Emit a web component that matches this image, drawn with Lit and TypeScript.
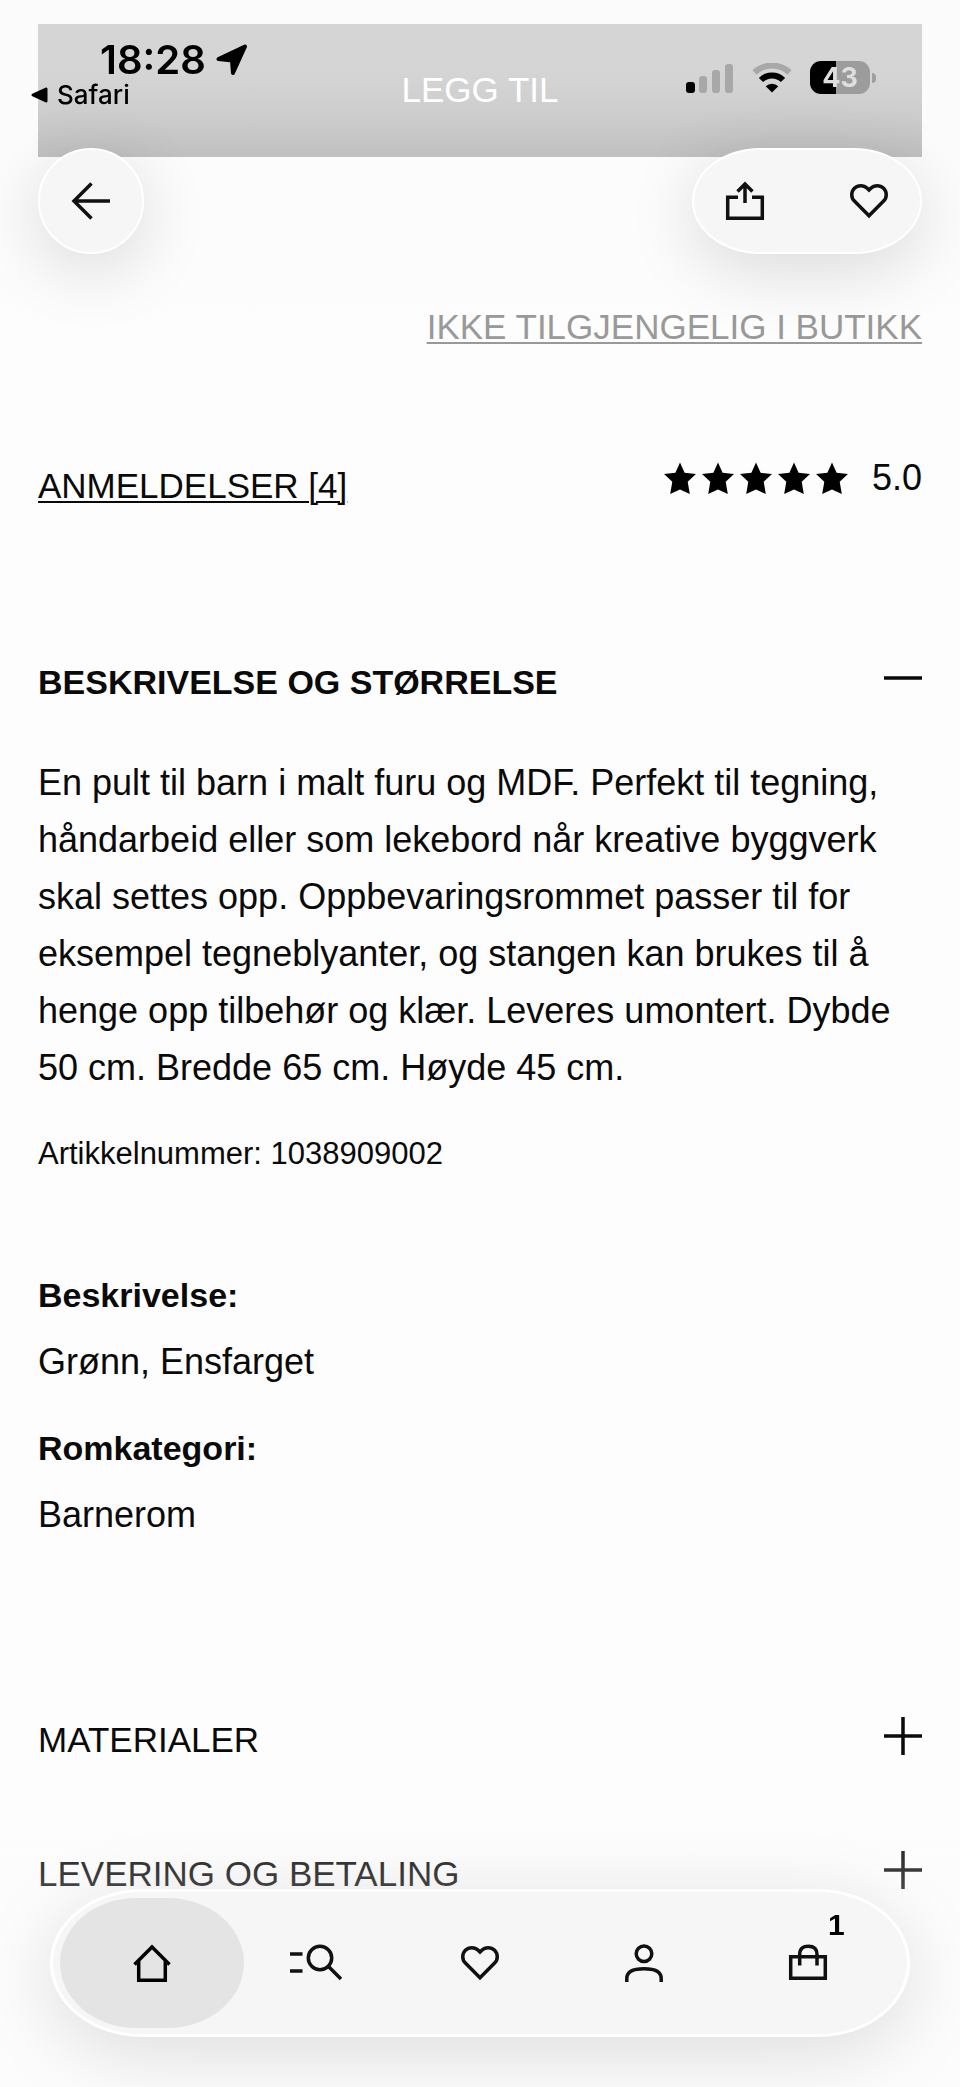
import { LitElement, html, css, svg, nothing } from "lit";
import { customElement, property, state } from "lit/decorators.js";
import { classMap } from "lit/directives/class-map.js";

const icons = {
  back: svg`<path d="M38 19H2M19.5 1.5L2 19l17.5 17.5" />`,
  share: svg`<path d="M12 15.2H1.7v21.1h34.6V15.2H26M19 21V2M11.5 9.5L19 2l7.500 7.500" />`,
  heart: svg`<path d="M19 33.700L4.400 19.100A9 9 0 0 1 17.200 6.300L19 8.100l1.800-1.800A9 9 0 0 1 33.600 19.100Z" />`,
  home: svg`<path d="M1.500 20.500L19 3l17.500 17.500M5.700 17V36.300H32.300V17" />`,
  person: svg`<circle cx="19" cy="9.700" r="7.800" /><path d="M1.800 38V34.500C1.800 28 8 24.800 19 24.800S36.200 28 36.200 34.500V38" />`,
  bag: svg`<path d="M1.700 12.700h34.600v21.600H1.700zM10.700 21.500V10.500C10.700 4.500 14 2.300 19.300 2.300S28 4.500 28 10.500V21.500" />`,
  plus: svg`<path d="M0 19h38M19 0v38" />`,
  minus: svg`<path d="M0 19h38" />`,
};

type IconName = keyof typeof icons;

@customElement("line-icon")
export class LineIcon extends LitElement {
  @property() name: IconName = "heart";

  static styles = css`
    :host {
      display: block;
      width: 38px;
      height: 38px;
      flex: none;
    }
    .glyph {
      display: block;
      width: 100%;
      height: 100%;
      fill: none;
      stroke: currentColor;
      stroke-width: 3.5;
      overflow: visible;
    }
  `;

  render() {
    return html`<svg class="glyph" viewBox="0 0 38 38" aria-hidden="true">${icons[this.name]}</svg>`;
  }
}

@customElement("phone-status")
export class PhoneStatus extends LitElement {
  static styles = css`
    :host {
      display: flex;
      justify-content: space-between;
      align-items: flex-start;
      font-family: Inter, "Liberation Sans", sans-serif;
      color: #000;
    }
    .clock {
      display: flex;
      align-items: center;
      gap: 10px;
      padding-left: 69px;
      font-size: 40px;
      line-height: 46px;
      font-weight: 600;
    }
    .origin {
      display: flex;
      align-items: center;
      gap: 9px;
      font-size: 26px;
      line-height: 24px;
      font-weight: 500;
    }
    .signals {
      display: flex;
      align-items: center;
      gap: 18px;
      padding: 24px 46px 0 0;
    }
    .battery {
      display: flex;
      align-items: center;
      gap: 2px;
    }
    .cell {
      width: 60px;
      height: 33px;
      border-radius: 11px;
      background: linear-gradient(90deg, #000 43%, #9c9c9c 43%);
      color: #dedede;
      font-size: 27px;
      line-height: 33px;
      font-weight: 700;
      text-align: center;
    }
    .nub {
      width: 4px;
      height: 10px;
      border-radius: 0 5px 5px 0;
      background: #a0a0a0;
    }
    svg {
      display: block;
    }
  `;

  render() {
    return html`
      <div>
        <div class="clock">
          18:28
          <svg width="32" height="32" viewBox="0 0 32 32" aria-hidden="true">
            <path d="M29 2.500L17 29L16 16.500L2.500 15Z" stroke="#000" stroke-width="4" stroke-linejoin="round" />
          </svg>
        </div>
        <div class="origin">
          <svg width="17" height="18" viewBox="0 0 17 18" aria-hidden="true">
            <path d="M2 9L15 3V15Z" stroke="#000" stroke-width="3" stroke-linejoin="round" />
          </svg>
          Safari
        </div>
      </div>
      <div class="signals">
        <svg width="48" height="30" viewBox="0 0 48 30" aria-hidden="true">
          <rect x="0" y="19" width="9" height="11" rx="3" />
          <g fill="#a8a8a8">
            <rect x="13" y="13" width="8" height="17" rx="3" />
            <rect x="26" y="7" width="8" height="23" rx="3" />
            <rect x="39" y="1" width="8" height="29" rx="3" />
          </g>
        </svg>
        <svg width="40" height="30" viewBox="0 0 40 30" fill="none" stroke-width="6" aria-hidden="true">
          <path d="M2.500 9.500A25.500 25.500 0 0 1 37.500 9.500" stroke="#a8a8a8" />
          <path d="M9 17A15.500 15.500 0 0 1 31 17" stroke="#000" />
          <path d="M13.700 23.200A9 9 0 0 1 26.300 23.200L20 29.500Z" fill="#000" />
        </svg>
        <div class="battery">
          <div class="cell">43</div>
          <div class="nub"></div>
        </div>
      </div>
    `;
  }
}

@customElement("tab-bar")
export class TabBar extends LitElement {
  @state() private active = "Hjem";

  static styles = css`
    .bar {
      display: grid;
      grid-template-columns: repeat(5, 1fr);
      padding: 6px 17px;
      border: 3px solid #fff;
      border-radius: 92px / 74px;
      background: #f6f6f6;
      box-shadow: 0 16px 80px rgba(0, 0, 0, 0.13);
    }
    .tab {
      position: relative;
      display: flex;
      align-items: center;
      justify-content: center;
      height: 130px;
      margin: 0 -10px;
      padding: 0;
      border: 0;
      border-radius: 76px / 65px;
      background: none;
      color: #111;
      font-family: "Liberation Sans", Arial, sans-serif;
    }
    .active {
      background: #e4e4e4;
      color: #000;
    }
    .search {
      display: block;
      fill: none;
      stroke: currentColor;
      stroke-width: 3.5;
    }
    .badge {
      position: absolute;
      top: 12px;
      left: calc(50% + 20px);
      font-size: 30px;
      line-height: 30px;
      font-weight: 700;
      color: #000;
    }
  `;

  private tab(label: string, icon: unknown, badge?: number) {
    return html`<button
      class=${classMap({ tab: true, active: this.active === label })}
      aria-label=${label}
      @click=${() => (this.active = label)}
    >
      ${icon}${badge ? html`<span class="badge">${badge}</span>` : nothing}
    </button>`;
  }

  render() {
    return html`<nav class="bar">
      ${this.tab("Hjem", html`<line-icon name="home"></line-icon>`)}
      ${this.tab(
        "Søk",
        html`<svg class="search" width="52" height="38" viewBox="0 0 52 38" aria-hidden="true">
          <path d="M0 10h12.500M0 27h12.500M38.500 22.500L51 35" />
          <circle cx="30" cy="14" r="11.700" />
        </svg>`,
      )}
      ${this.tab("Favoritter", html`<line-icon name="heart"></line-icon>`)}
      ${this.tab("Konto", html`<line-icon name="person"></line-icon>`)}
      ${this.tab("Handlekurv", html`<line-icon name="bag"></line-icon>`, 1)}
    </nav>`;
  }
}

@customElement("app-root")
export class AppRoot extends LitElement {
  static styles = css`
    :host {
      display: block;
      box-sizing: border-box;
      min-height: 100vh;
      background: linear-gradient(#fbfbfb, #fdfdfd 360px);
      color: #0a0a0a;
      font-family: "Liberation Sans", Arial, Helvetica, sans-serif;
      font-size: 35px;
      line-height: 40px;
    }
    .page {
      display: flex;
      flex-direction: column;
      padding: 24px 38px 0;
    }
    button {
      font: inherit;
      color: inherit;
    }
    .add {
      height: 133px;
      padding: 0 0 2px;
      border: 0;
      background: linear-gradient(#d5d5d5 35%, #cecece 65%, #c0c0c0);
      color: #fff;
      font-size: 35px;
    }
    .link {
      color: inherit;
      text-decoration-thickness: 2px;
      text-underline-offset: 3px;
    }
    .muted {
      align-self: flex-end;
      margin-top: 150px;
      color: #999;
    }
    .reviews {
      display: flex;
      justify-content: space-between;
      align-items: flex-start;
      margin-top: 111px;
    }
    .reviews .link {
      line-height: 56px;
    }
    .rating {
      display: flex;
      align-items: center;
      gap: 24px;
      font-size: 36px;
    }
    .stars {
      display: flex;
      gap: 6px;
    }
    .details {
      margin-top: 97px;
    }
    .title {
      margin: 0;
      font: inherit;
    }
    .toggle {
      display: flex;
      align-items: center;
      justify-content: space-between;
      width: 100%;
      height: 134px;
      padding: 0;
      border: 0;
      background: none;
      text-align: left;
    }
    .toggle span {
      padding-top: 8px;
    }
    .open {
      font-size: 34px;
      font-weight: 700;
    }
    .text {
      margin: 9px 0 0;
      font-size: 36px;
      line-height: 57px;
    }
    .article {
      margin: 38px 0 0;
      font-size: 31px;
    }
    .facts {
      margin: 97px 0 130px;
      line-height: 48px;
    }
    .facts dt {
      font-size: 34px;
      font-weight: 700;
    }
    .facts dd {
      margin: 19px 0 38px;
      font-size: 36px;
    }
    .facts dd:last-child {
      margin-bottom: 0;
    }
    .top {
      position: fixed;
      inset: 0 0 auto;
      padding: 37px 38px 0 31px;
    }
    .actions {
      display: flex;
      justify-content: space-between;
      padding: 41px 0 0 7px;
    }
    .glass {
      display: flex;
      align-items: center;
      justify-content: space-between;
      box-sizing: border-box;
      height: 106px;
      padding: 0 32px;
      border: 2px solid #fff;
      border-radius: 68px / 53px;
      background: #f6f6f6;
      color: #111;
      box-shadow: 0 16px 70px rgba(0, 0, 0, 0.14);
    }
    .round {
      width: 106px;
      border-radius: 50%;
    }
    .pair {
      width: 230px;
    }
    .plain {
      padding: 0;
      border: 0;
      background: none;
    }
    .bottom {
      position: fixed;
      inset: auto 0 0;
      padding: 90px 50px 50px;
      background: linear-gradient(rgba(253, 253, 253, 0), rgba(253, 253, 253, 0.25) 90px);
    }
  `;

  render() {
    return html`
      <main class="page">
        <button class="add">LEGG TIL</button>
        <a class="link muted" href="#butikk">IKKE TILGJENGELIG I BUTIKK</a>
        <div class="reviews">
          <a class="link" href="#anmeldelser">ANMELDELSER [4]</a>
          <div class="rating">
            <div class="stars" role="img" aria-label="5 av 5 stjerner">
              ${[1, 2, 3, 4, 5].map(
                () => html`<svg width="32" height="32" viewBox="0 0 32 32" aria-hidden="true">
                  <path
                    d="M16 0.500L20.600 10.800L32 11.900L23.700 19.800L25.800 32L16 27.500L6.200 32L8.300 19.800L0 11.900L11.400 10.800Z"
                  />
                </svg>`,
              )}
            </div>
            <span>5.0</span>
          </div>
        </div>
        <section class="details">
          <h2 class="title">
            <button class="toggle open" aria-expanded="true">
              <span>BESKRIVELSE OG STØRRELSE</span><line-icon name="minus"></line-icon>
            </button>
          </h2>
          <p class="text">
            En pult til barn i malt furu og MDF. Perfekt til tegning, håndarbeid eller som lekebord når kreative
            byggverk skal settes opp. Oppbevaringsrommet passer til for eksempel tegneblyanter, og stangen kan brukes
            til å henge opp tilbehør og klær. Leveres umontert. Dybde 50 cm. Bredde 65 cm. Høyde 45 cm.
          </p>
          <p class="article">Artikkelnummer: 1038909002</p>
          <dl class="facts">
            <dt>Beskrivelse:</dt>
            <dd>Grønn, Ensfarget</dd>
            <dt>Romkategori:</dt>
            <dd>Barnerom</dd>
          </dl>
        </section>
        ${["MATERIALER", "LEVERING OG BETALING"].map(
          (label) => html`<h2 class="title">
            <button class="toggle" aria-expanded="false">
              <span>${label}</span><line-icon name="plus"></line-icon>
            </button>
          </h2>`,
        )}
      </main>
      <header class="top">
        <phone-status></phone-status>
        <div class="actions">
          <button class="glass round" aria-label="Tilbake"><line-icon name="back"></line-icon></button>
          <div class="glass pair">
            <button class="plain" aria-label="Del"><line-icon name="share"></line-icon></button>
            <button class="plain" aria-label="Legg til i favoritter"><line-icon name="heart"></line-icon></button>
          </div>
        </div>
      </header>
      <div class="bottom"><tab-bar></tab-bar></div>
    `;
  }
}
